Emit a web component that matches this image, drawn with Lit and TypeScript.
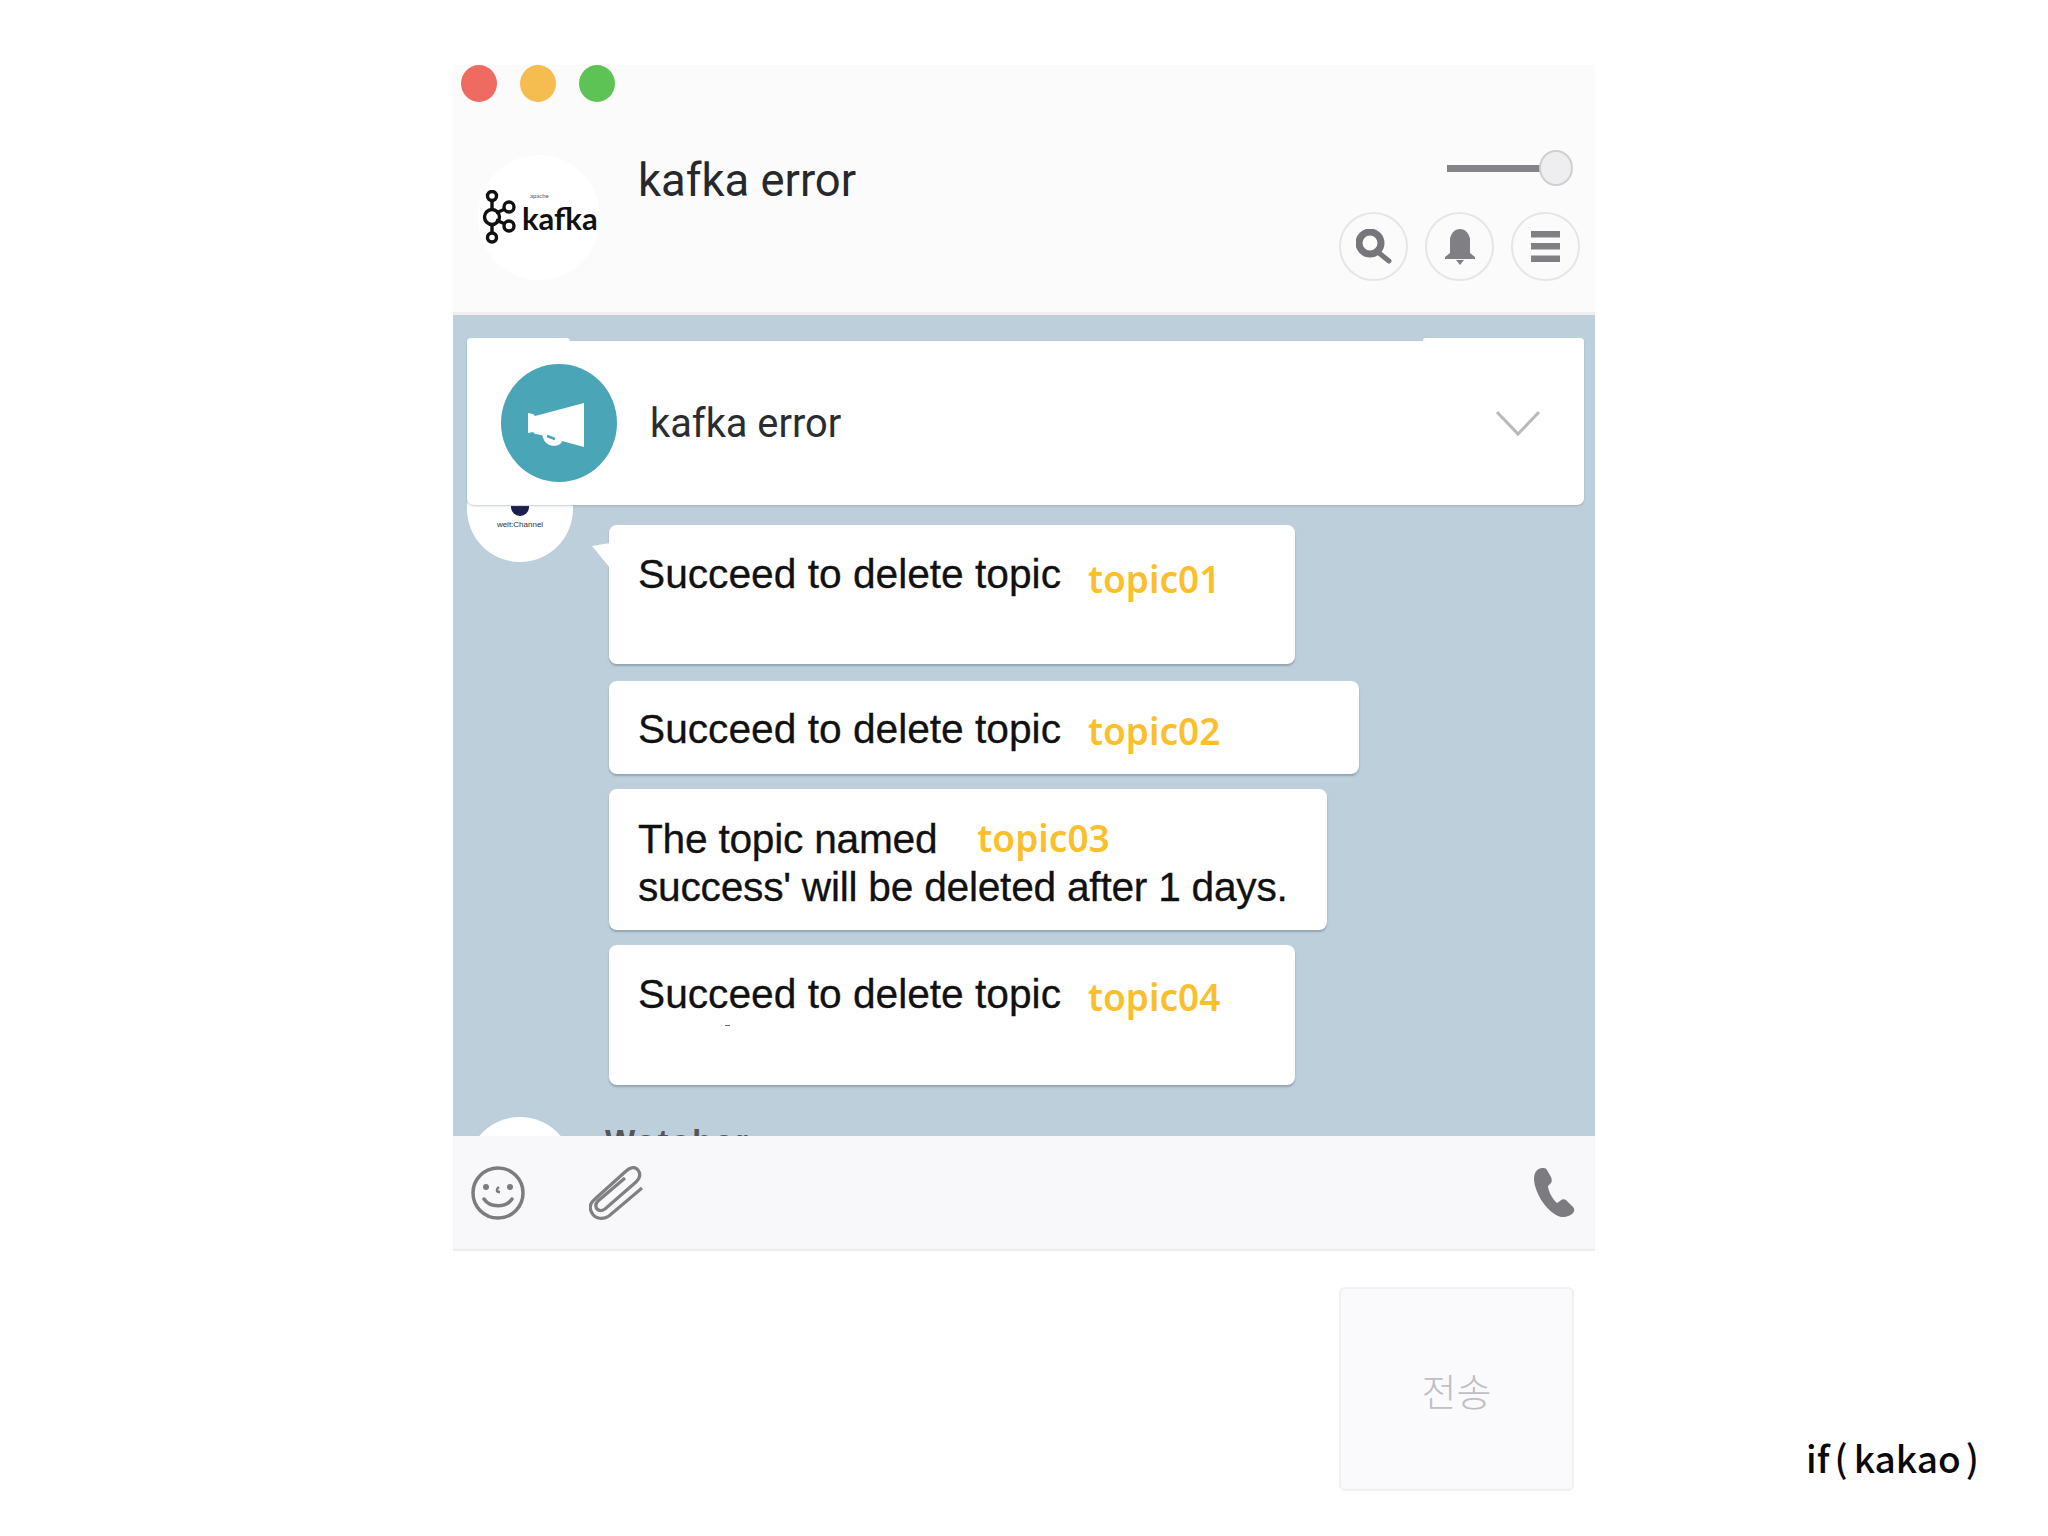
import { LitElement, html, css } from "lit";
import { customElement } from "lit/decorators.js";

@customElement("app-root")
export class AppRoot extends LitElement {
  static styles = css`
    :host { display: block; background: #fff; font-family: "Liberation Sans", Arial, sans-serif; }
    .page { position: relative; height: 1536px; box-sizing: border-box; padding: 65px 0 0 453px; overflow: hidden; }
    .window { width: 1142px; display: flex; flex-direction: column; }

    .header { height: 250px; background: #fbfbfc; border-bottom: 3px solid #f1efee; box-sizing: border-box; }
    .traffic { display: flex; gap: 23px; padding-left: 8px; height: 37px; }
    .dot { width: 36px; height: 37px; border-radius: 50%; }
    .red { background: #ef6a60; }
    .yellow { background: #f5bd4f; }
    .green { background: #5cc354; }
    .hbody { display: flex; margin-top: 53px; padding-left: 25px; }
    .avatar { width: 122px; height: 125px; border-radius: 50%; background: #fff; display: flex; align-items: center; box-sizing: border-box; padding-left: 4px; flex: none; }
    .logo { margin-top: -2px; }
    .kafka-name { display: flex; flex-direction: column; margin: -6px 0 0 6px; color: #111; font-family: "Lato", sans-serif; font-size: 31px; font-weight: 700; line-height: 38px; }
    .apache { font-size: 6px; line-height: 6px; margin-left: 8px; color: #555; font-weight: 400; }
    .title { font-family: Roboto, sans-serif; font-size: 45.4px; line-height: 52px; color: #26282c; margin: 0 0 0 38px; }
    .controls { margin-left: auto; margin-top: -6px; padding-right: 15px; display: flex; flex-direction: column; align-items: flex-end; }
    .slider { display: flex; align-items: center; margin-right: 7px; }
    .track { width: 93px; height: 7px; background: #848488; margin-top: 2px; }
    .thumb { width: 34px; height: 36px; border-radius: 50%; box-sizing: border-box; border: 2px solid #cfcfd2; background: #eeeef0; margin-left: -1px; margin-top: 1px; }
    .buttons { display: flex; gap: 17px; margin-top: 26px; }
    .btn { width: 69px; height: 69px; border-radius: 50%; border: 2px solid #e6e6e8; box-sizing: border-box; display: flex; align-items: center; justify-content: center; }

    .chat { position: relative; height: 821px; overflow: hidden; background: #bdcfda; box-sizing: border-box; padding: 141px 0 0 14px; }
    .pin { position: absolute; left: 14px; right: 11px; top: 26px; height: 164px; background: #fff; border-radius: 0 0 7px 7px; box-shadow: 0 1px 2px rgba(110,130,145,.4); display: flex; align-items: center; padding-left: 34px; box-sizing: border-box; z-index: 2; }
    .pin::before, .pin::after { content: ""; position: absolute; top: -3px; height: 4px; background: #fff; }
    .pin::before { left: 0; width: 103px; border-radius: 5px 5px 0 0; }
    .pin::after { right: 0; width: 161px; border-radius: 5px 7px 0 0; }
    .pin-icon { width: 116px; height: 118px; border-radius: 50%; background: #4aa5b7; flex: none; }
    .pin-title { font-family: Roboto, sans-serif; font-size: 39.8px; color: #2a2c30; margin: 1px 0 0 33px; }
    .chev { margin-left: auto; margin-right: 43px; }

    .row { display: flex; }
    .ava { width: 106px; height: 106px; border-radius: 50%; background: #fff; flex: none; display: flex; flex-direction: column; align-items: center; justify-content: flex-end; padding-bottom: 33px; box-sizing: border-box; }
    .ava-dot { width: 18px; height: 10px; border-radius: 0 0 9px 9px; background: #1c1f4e; margin-bottom: 5px; }
    .ava-text { font-size: 8px; line-height: 8px; color: #333; white-space: nowrap; }
    .col { margin: 69px 0 0 36px; display: flex; flex-direction: column; }
    .b { position: relative; box-sizing: border-box; background: #fff; border-radius: 8px; padding: 25px 0 0 29px; font-size: 40.7px; line-height: 48px; color: #111; -webkit-text-stroke: .3px #111; box-shadow: 0 2px 2px rgba(110,130,145,.55); white-space: nowrap; }
    .b1 { width: 686px; height: 139px; margin-bottom: 17px; }
    .b2 { width: 750px; height: 93px; margin-bottom: 15px; padding-top: 24px; }
    .b3 { width: 718px; height: 141px; margin-bottom: 15px; letter-spacing: -.25px; }
    .b4 { width: 686px; height: 140px; }
    .tail { position: absolute; left: -17px; top: 18px; }
    .speck { position: absolute; left: 116px; top: 80px; width: 5px; height: 1px; background: #666; }
    .o { font-family: "Noto Sans", sans-serif; font-weight: 600; font-size: 37px; letter-spacing: 0; color: #fbbf2d; -webkit-text-stroke: 0; margin-left: 27px; vertical-align: -5px; }
    .o2 { vertical-align: -2px; }
    .o3 { vertical-align: 1px; margin-left: 40px; }
    .o4 { vertical-align: -3px; }
    .next { display: flex; margin-top: 32px; }
    .ava2 { width: 106px; height: 106px; border-radius: 50%; background: #fff; flex: none; }
    .next-name { font-size: 32px; font-weight: 700; line-height: 36px; margin: 6px 0 0 32px; color: #555; letter-spacing: 3px; }

    .toolbar { height: 115px; background: #f8f8fa; border-bottom: 2px solid #ececef; box-sizing: border-box; display: flex; align-items: center; padding: 0 20px 0 18px; gap: 64px; }
    .phone { margin-left: auto; }
    .input { display: flex; justify-content: flex-end; padding: 36px 21px 0 0; }
    .send { width: 235px; height: 204px; box-sizing: border-box; background: #faf9fb; border: 2px solid #f1f1f3; border-radius: 6px; display: flex; align-items: center; justify-content: center; font-family: "Noto Sans CJK KR", sans-serif; font-weight: 300; font-size: 38px; color: #bfbfc4; }
    .brand { position: absolute; left: 1806px; top: 1431px; font-family: "Noto Sans CJK KR", sans-serif; font-weight: 500; font-size: 37px; line-height: 52px; color: #0a0a0a; white-space: nowrap; }
    .paren { margin: 0 6px 0 5px; }
  `;

  render() {
    return html`<div class="page">
      <div class="window">
        <div class="header">
          <div class="traffic"><div class="dot red"></div><div class="dot yellow"></div><div class="dot green"></div></div>
          <div class="hbody">
            <div class="avatar">
              <svg class="logo" width="34" height="54" viewBox="0 0 34 54" fill="none" stroke="#111" stroke-width="3.4">
                <path d="M10 10L10 20M10 33L10 43M14 23L23 19M14 30L23 34"/>
                <circle cx="10" cy="6" r="4.5"/><circle cx="10" cy="27" r="7.5"/><circle cx="10" cy="47.5" r="4.5"/>
                <circle cx="27" cy="17" r="5"/><circle cx="27" cy="36" r="5"/>
              </svg>
              <div class="kafka-name"><span class="apache">apache</span><span>kafka</span></div>
            </div>
            <div class="title">kafka error</div>
            <div class="controls">
              <div class="slider"><div class="track"></div><div class="thumb"></div></div>
              <div class="buttons">
                <div class="btn"><svg width="36" height="36" viewBox="0 0 36 36" fill="none" stroke="#77777b" stroke-width="7"><circle cx="14" cy="14" r="11"/><path d="M23 24L33 32" stroke-linecap="round" stroke-width="5"/></svg></div>
                <div class="btn"><svg width="30" height="36" viewBox="0 0 30 36" fill="#808084"><path d="M15 0C20 0 24 4 25 10V24L30 28V30H0V28L5 24V10C6 4 10 0 15 0Z"/><path d="M11 31H19L15 36Z"/></svg></div>
                <div class="btn"><svg width="29" height="31" viewBox="0 0 29 31" fill="#808084"><rect width="29" height="6.5"/><rect y="12" width="29" height="6.5"/><rect y="24.5" width="29" height="6.5"/></svg></div>
              </div>
            </div>
          </div>
        </div>

        <div class="chat">
          <div class="pin">
            <div class="pin-icon"><svg width="116" height="118" viewBox="0 0 116 118"><path fill="#fff" d="M83 39V83L61 77C60 83 47 84 43 76L41 71L34 70L32 68L27 69V49L32 50L34 52Z"/><path d="M46 72L54 75" stroke="#4aa5b7" stroke-width="2.5" fill="none"/></svg></div>
            <div class="pin-title">kafka error</div>
            <svg class="chev" width="46" height="28" viewBox="0 0 46 28" fill="none" stroke="#b9b9bc" stroke-width="3"><path d="M2 3L23 25L44 3"/></svg>
          </div>
          <div class="row">
            <div class="ava"><div class="ava-dot"></div><div class="ava-text">welt:Channel</div></div>
            <div class="col">
              <div class="b b1">
                <svg class="tail" width="18" height="25" viewBox="0 0 18 25"><path fill="#fff" d="M0 3L18 0V25Z"/></svg>
                Succeed to delete topic<span class="o">topic01</span>
              </div>
              <div class="b b2">Succeed to delete topic<span class="o o2">topic02</span></div>
              <div class="b b3">The topic named<span class="o o3">topic03</span><br>success' will be deleted after 1 days.</div>
              <div class="b b4">Succeed to delete topic<span class="o o4">topic04</span><div class="speck"></div></div>
            </div>
          </div>
          <div class="next">
            <div class="ava2"></div>
            <div class="next-name">Watcher</div>
          </div>
        </div>

        <div class="toolbar">
          <svg width="54" height="54" viewBox="0 0 54 54" fill="none" stroke="#7c7c80" stroke-width="3.5"><circle cx="27" cy="27" r="25"/><path d="M13 33C19 42 35 42 41 33" stroke-linecap="round"/><path d="M28 21C25 23 25 26 29 26" stroke-width="2.5"/><circle cx="15" cy="21" r="3" fill="#7c7c80" stroke="none"/><circle cx="39" cy="21" r="3" fill="#7c7c80" stroke="none"/></svg>
          <svg width="54" height="54" viewBox="0 0 54 54" fill="none" stroke="#808084" stroke-width="3.2"><path d="M53 22L20 50C14 54 6 53 3 47C0 42 1 37 6 33L36 6C41 1 46 0 49 4C52 8 51 12 47 16L16 43C13 45 10 45 8 43C6 40 7 37 9 35L36 12"/></svg>
          <svg class="phone" width="41" height="49" viewBox="0 0 41 49" fill="#7c7c80"><path d="M8 0C2 1 0 5 0 12C1 24 10 40 22 47C27 50 32 50 38 46C41 43 41 41 38 38L32 32C30 31 28 31 26 33L23 35C19 32 14 23 14 18L17 15C18 13 18 12 17 9L13 2C12 0 10 0 8 0Z"/></svg>
        </div>

        <div class="input"><div class="send">전송</div></div>
      </div>
      <div class="brand">if<span class="paren">(</span>kakao<span class="paren">)</span></div>
    </div>`;
  }
}
